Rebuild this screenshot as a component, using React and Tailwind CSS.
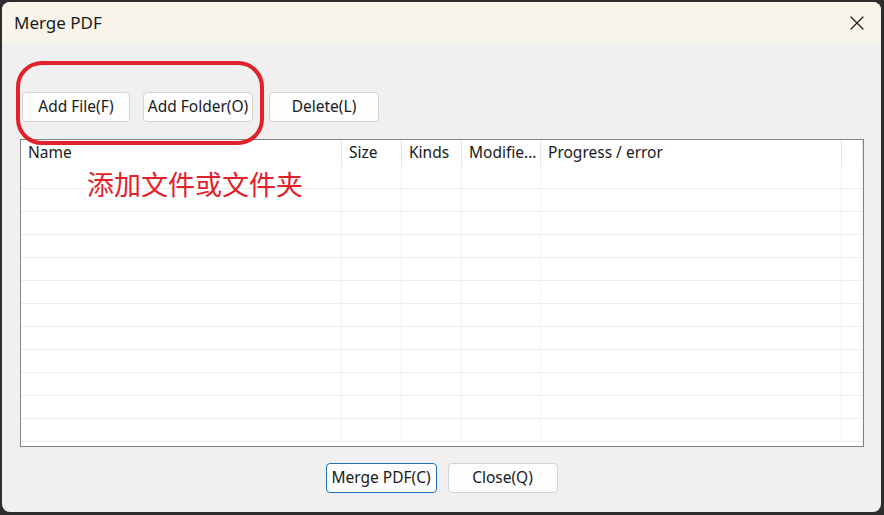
import { X } from 'lucide-react'

const columns = [
  { label: 'Name', w: 'w-[321px]' },
  { label: 'Size', w: 'w-[60px]' },
  { label: 'Kinds', w: 'w-[60px]' },
  { label: 'Modifie...', w: 'w-[79px]' },
  { label: 'Progress / error', w: 'w-[301px]' },
  { label: '', w: 'flex-1' },
]

const rows = Array.from({ length: 12 })

function WinButton({ children, width, primary }) {
  return (
    <button
      type="button"
      className={
        'h-[30px] rounded-[4px] border bg-[#fdfdfd] text-[15.5px] text-[#1a1a1a] ' +
        width +
        (primary ? ' border-[#1b6fb8]' : ' border-[#d3d3d3]')
      }
    >
      {children}
    </button>
  )
}

export default function App() {
  return (
    <div
      className="h-[515px] w-[884px] overflow-hidden bg-[#2d2d2d] pt-[2px] pl-[2px] pr-[3px] pb-[3px]"
      style={{ fontFamily: '"Noto Sans", "Noto Sans CJK SC", sans-serif' }}
    >
      <div className="relative flex h-full flex-col overflow-hidden rounded-[8px] bg-[#f0f0f0]">
        {/* title bar */}
        <div className="flex h-[41px] items-center justify-between bg-[#f8f4e9] pl-[12px] pr-[12px]">
          <span className="text-[17px] text-[#1a1a1a]">Merge PDF</span>
          <X size={24} strokeWidth={1.2} className="text-[#1a1a1a]" />
        </div>

        <div className="flex flex-1 flex-col pl-[18px] pr-[14px]">
          {/* toolbar */}
          <div className="mt-[49px] flex pl-[2px]">
            <WinButton width="w-[108px]">Add File(F)</WinButton>
            <div className="ml-[13px]">
              <WinButton width="w-[110px]">Add Folder(O)</WinButton>
            </div>
            <div className="ml-[16px]">
              <WinButton width="w-[110px]">Delete(L)</WinButton>
            </div>
          </div>

          {/* file list */}
          <div className="mt-[17px] h-[308px] w-[844px] overflow-hidden border border-[#838383] bg-white">
            <div className="flex h-[26px]">
              {columns.map((c, i) => (
                <div
                  key={i}
                  className={'flex h-full items-center border-r border-[#e6e6e6] px-[7px] text-[15.5px] text-[#1a1a1a] ' + c.w}
                >
                  {c.label}
                </div>
              ))}
            </div>
            {rows.map((_, r) => (
              <div key={r} className="flex h-[23px] border-b border-[#ececec]">
                {columns.map((c, i) => (
                  <div key={i} className={'h-full border-r border-[#f2f2f2] ' + c.w} />
                ))}
              </div>
            ))}
          </div>

          {/* dialog buttons */}
          <div className="mt-[16px] flex justify-center gap-[11px] pr-[4px]">
            <WinButton width="w-[111px]" primary>
              Merge PDF(C)
            </WinButton>
            <WinButton width="w-[110px]">Close(Q)</WinButton>
          </div>
        </div>

        {/* red markup over the toolbar */}
        <div className="pointer-events-none absolute left-[14px] top-[59px] h-[84px] w-[248px] rounded-[26px] border-[4px] border-[#e3212b]" />
        <div className="pointer-events-none absolute left-[85px] top-[169px] text-[27px] leading-none text-[#e3212b]">
          添加文件或文件夹
        </div>
      </div>
    </div>
  )
}
